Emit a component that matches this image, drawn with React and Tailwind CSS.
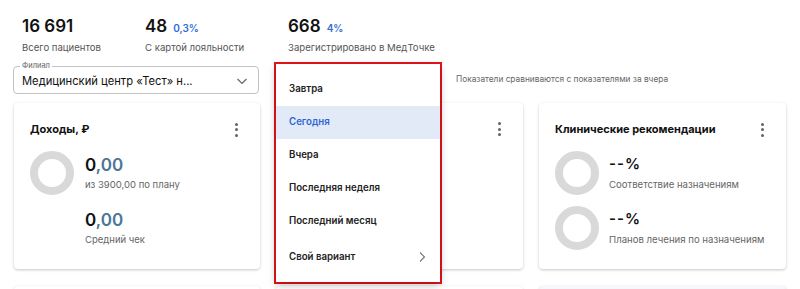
import React from 'react';

const font = { fontFamily: 'Inter, "Noto Sans", sans-serif' };

function Kebab() {
    return (
        <div className="flex flex-col items-center gap-[2.5px] pt-[1px] w-4">
            <span className="w-[3px] h-[3px] rounded-full bg-[#5f6368]" />
            <span className="w-[3px] h-[3px] rounded-full bg-[#5f6368]" />
            <span className="w-[3px] h-[3px] rounded-full bg-[#5f6368]" />
        </div>
    );
}

function Donut() {
    return <div className="w-[44px] h-[44px] rounded-full border-[8px] border-[#d9d9d9] shrink-0" />;
}

function Stat({ value, delta, label, width }) {
    return (
        <div className={width}>
            <div className="flex items-baseline gap-[6px]">
                <span className="text-[17px] font-semibold text-[#111] leading-[20px]">{value}</span>
                {delta && <span className="text-[10px] font-semibold text-[#2d6bd8]">{delta}</span>}
            </div>
            <div className="text-[9.6px] text-[#555] mt-[5px] leading-[13px]">{label}</div>
        </div>
    );
}

function Money({ label }) {
    return (
        <div>
            <div className="text-[17px] font-semibold leading-[20px]">
                <span className="text-[#111]">0</span>
                <span className="text-[#4b7699]">,00</span>
            </div>
            <div className="text-[9.5px] text-[#666] mt-[3px] leading-[13px]">{label}</div>
        </div>
    );
}

function Percent({ label }) {
    return (
        <div className="flex items-center gap-[10px]">
            <Donut />
            <div>
                <div className="text-[15px] font-semibold text-[#111] leading-[18px] tracking-[1px]">--%</div>
                <div className="text-[9.6px] text-[#666] mt-[5px] leading-[13px] whitespace-nowrap">{label}</div>
            </div>
        </div>
    );
}

const items = ['Завтра', 'Сегодня', 'Вчера', 'Последняя неделя', 'Последний месяц'];

export default function App() {
    return (
        <div className="relative w-[800px] h-[289px] overflow-hidden bg-white" style={font}>
            <div className="flex pl-[22px] pt-[16px]">
                <Stat value="16 691" label="Всего пациентов" width="w-[123px]" />
                <Stat value="48" delta="0,3%" label="С картой лояльности" width="w-[143px]" />
                <Stat value="668" delta="4%" label="Зарегистрировано в МедТочке" width="w-[200px]" />
            </div>

            <div className="flex items-center mt-[12px] pl-[13px]">
                <div className="relative w-[246px] h-[28px] border border-[#c4c4c4] rounded-[4px] flex items-center pl-[8px] pr-[10px]">
                    <span className="absolute -top-[6px] left-[6px] bg-white px-[2px] text-[7.5px] leading-[10px] text-[#666]">Филиал</span>
                    <span className="text-[11.2px] text-[#111] flex-1 mt-[3px]">Медицинский центр «Тест» н...</span>
                    <svg width="12" height="12" viewBox="0 0 12 12" className="mt-[1px]">
                        <path d="M1.5 4 L6 8.5 L10.5 4" fill="none" stroke="#666" strokeWidth="1.2" />
                    </svg>
                </div>
                <div className="ml-[197px] text-[8.3px] text-[#666] mt-[-2px]">Показатели сравниваются с показателями за вчера</div>
            </div>

            <div className="flex gap-[16px] pl-[14px] mt-[9px]">
                <div className="w-[246px] h-[166px] rounded-[4px] bg-white shadow-[0_1px_3px_rgba(0,0,0,0.22)] px-[16px] pt-[18px]">
                    <div className="flex items-center justify-between">
                        <span className="text-[11px] font-bold text-[#111]">Доходы, ₽</span>
                        <Kebab />
                    </div>
                    <div className="flex gap-[11px] mt-[13px]">
                        <Donut />
                        <div className="flex flex-col gap-[19px] pt-[4px]">
                            <Money label="из 3900,00 по плану" />
                            <Money label="Средний чек" />
                        </div>
                    </div>
                </div>
                <div className="w-[247px] h-[166px] rounded-[4px] bg-white shadow-[0_1px_3px_rgba(0,0,0,0.22)] px-[16px] pt-[18px]">
                    <div className="flex items-center justify-end">
                        <Kebab />
                    </div>
                </div>
                <div className="w-[247px] h-[166px] rounded-[4px] bg-white shadow-[0_1px_3px_rgba(0,0,0,0.22)] px-[16px] pt-[18px]">
                    <div className="flex items-center justify-between">
                        <span className="text-[11px] font-bold text-[#111]">Клинические рекомендации</span>
                        <Kebab />
                    </div>
                    <div className="flex flex-col gap-[11px] mt-[13px]">
                        <Percent label="Соответствие назначениям" />
                        <Percent label="Планов лечения по назначениям" />
                    </div>
                </div>
            </div>

            <div className="flex gap-[16px] pl-[14px] mt-[17px]">
                <div className="w-[246px] h-[40px] rounded-[4px] bg-white shadow-[0_1px_3px_rgba(0,0,0,0.22)]" />
                <div className="w-[247px] h-[40px] rounded-[4px] bg-white shadow-[0_1px_3px_rgba(0,0,0,0.22)]" />
                <div className="w-[247px] h-[40px] rounded-[4px] bg-[#f4f7fc] shadow-[0_1px_3px_rgba(0,0,0,0.22)]" />
            </div>

            <div className="absolute left-[274px] top-[62px] w-[168px] h-[222px] border-2 border-[#e8141b]">
                <div className="h-full bg-white shadow-[0_3px_8px_rgba(0,0,0,0.25)] pt-[9px]">
                    {items.map((t, i) => (
                        <div
                            key={t}
                            className={
                                i === 1
                                    ? 'h-[33px] flex items-center pl-[13px] text-[9.7px] font-semibold bg-[#e3eaf7] text-[#2d66d4]'
                                    : 'h-[33px] flex items-center pl-[13px] text-[9.7px] font-semibold text-[#222]'
                            }
                        >
                            {t}
                        </div>
                    ))}
                    <div className="h-[38px] flex items-center justify-between pl-[13px] pr-[14px] text-[9.7px] font-semibold text-[#222]">
                        <span>Свой вариант</span>
                        <svg width="8" height="12" viewBox="0 0 8 12">
                            <path d="M2 1.5 L6.5 6 L2 10.5" fill="none" stroke="#777" strokeWidth="1.1" />
                        </svg>
                    </div>
                </div>
            </div>
        </div>
    );
}
